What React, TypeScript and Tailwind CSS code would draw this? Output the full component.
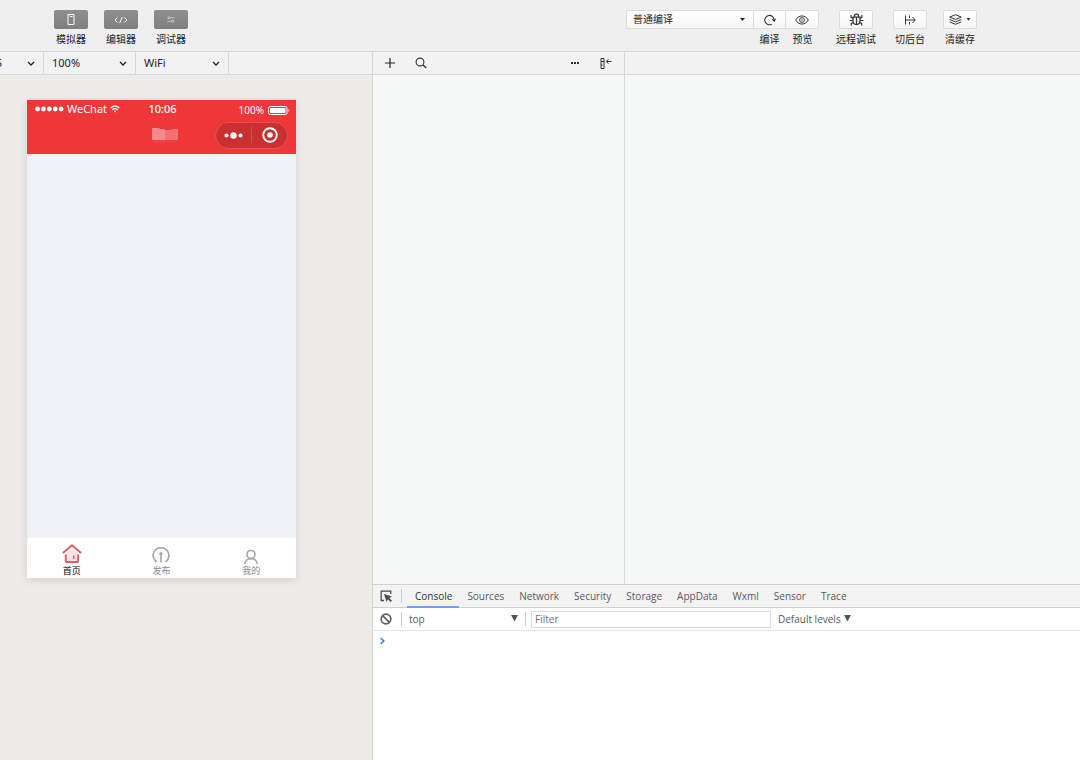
import type { ReactNode } from 'react'

const DEVTOOLS_TABS = ['Console', 'Sources', 'Network', 'Security', 'Storage', 'AppData', 'Wxml', 'Sensor', 'Trace']

const LIGHT_BUTTON = 'border border-[#dcdcdc] bg-linear-to-b from-white to-[#f6f6f6] text-[#333]'

export default function App() {
  return (
    <div className="flex min-h-screen flex-col overflow-hidden bg-[#eee] font-['Noto_Sans','Noto_Sans_CJK_SC',sans-serif] text-[11px] text-[#222]">
      <Toolbar />
      <div className="flex flex-1">
        <Simulator />
        <main className="flex min-w-0 flex-1 flex-col border-l border-[#d4d4d4]">
          <div className="flex flex-1">
            <FileTree />
            <section className="flex flex-1 flex-col">
              <div className="h-[23px] border-b border-[#d8d8d8] bg-[#f2f2f2]" />
              <div className="flex-1 bg-[#f6f8f7]" />
            </section>
          </div>
          <DevTools />
        </main>
      </div>
    </div>
  )
}

function Toolbar() {
  return (
    <header className="flex h-[52px] items-start justify-between border-b border-[#d8d8d8] bg-[#efefef] pt-2.5 pr-[103px] pl-[54px]">
      <div className="flex gap-4">
        <ToolButton label="模拟器" active>
          <PhoneIcon />
        </ToolButton>
        <ToolButton label="编辑器" active>
          <CodeIcon />
        </ToolButton>
        <ToolButton label="调试器" active>
          <SlidersIcon />
        </ToolButton>
      </div>
      <div className="flex gap-5">
        <div className="flex">
          <div className="grid h-[19px] w-[127px] items-center rounded-l-xs border border-r-0 border-[#dcdcdc] bg-linear-to-b from-white to-[#f6f6f6]">
            <select aria-label="编译模式" className="col-start-1 row-start-1 h-full appearance-none pl-1.5 text-[10px]">
              <option>普通编译</option>
            </select>
            <svg className="pointer-events-none col-start-1 row-start-1 mr-2 justify-self-end" width="5" height="3" viewBox="0 0 5 3">
              <path d="M0 0h5L2.5 3z" fill="#222" />
            </svg>
          </div>
          <ToolButton label="编译" width="w-[33px]" className="rounded-r-none rounded-l-none">
            <ReloadIcon />
          </ToolButton>
          <ToolButton label="预览" width="w-[33px]" className="rounded-l-none border-l-0">
            <EyeIcon />
          </ToolButton>
        </div>
        <ToolButton label="远程调试">
          <BugIcon />
        </ToolButton>
        <div className="flex gap-4">
          <ToolButton label="切后台">
            <BackgroundIcon />
          </ToolButton>
          <ToolButton label="清缓存">
            <LayersIcon />
          </ToolButton>
        </div>
      </div>
    </header>
  )
}

function ToolButton({
  children,
  label,
  active,
  width = 'w-[34px]',
  className = ''
}: {
  children: ReactNode
  label: string
  active?: boolean
  width?: string
  className?: string
}) {
  return (
    <button className={`flex flex-col items-center gap-0.5 text-[10px] leading-4 whitespace-nowrap ${width}`}>
      <span
        className={`flex h-[19px] w-full items-center justify-center rounded-xs ${
          active ? 'bg-linear-to-b from-[#8e8e8e] to-[#808080] text-white' : LIGHT_BUTTON
        } ${className}`}
      >
        {children}
      </span>
      <span>{label}</span>
    </button>
  )
}

function Simulator() {
  return (
    <aside className="flex w-[372px] shrink-0 flex-col bg-[#edece8]">
      <div className="flex h-[23px] border-b border-[#d8d8d8] bg-[#f2f2f2]">
        <div className="flex w-11 justify-end overflow-hidden border-r border-[#d8d8d8]">
          <BarSelect label="Device" value="iPhone 5" width="w-[94px]" />
        </div>
        <div className="border-r border-[#d8d8d8]">
          <BarSelect label="Zoom" value="100%" width="w-[91px]" />
        </div>
        <div className="border-r border-[#d8d8d8]">
          <BarSelect label="Network" value="WiFi" width="w-[92px]" />
        </div>
      </div>
      <div className="px-[27px] pt-[25px]">
        <Phone />
      </div>
    </aside>
  )
}

function BarSelect({ label, value, width }: { label: string; value: string; width: string }) {
  return (
    <div className={`grid h-full shrink-0 items-center ${width}`}>
      <select aria-label={label} className="col-start-1 row-start-1 h-full appearance-none pl-2">
        <option>{value}</option>
      </select>
      <svg
        className="pointer-events-none col-start-1 row-start-1 mr-2 justify-self-end"
        width="8"
        height="5"
        viewBox="0 0 8 5"
        fill="none"
        stroke="#222"
        strokeWidth="1.3"
      >
        <path d="M1 1l3 3 3-3" />
      </svg>
    </div>
  )
}

function Phone() {
  return (
    <div className="flex w-[269px] flex-col bg-[#f0f2f8] shadow-[0_2px_8px_rgba(0,0,0,0.12)]">
      <div className="bg-[#ed3739] text-white">
        <div className="grid h-[18px] grid-cols-3 items-center pr-1.5 pl-2 text-[11px] leading-4">
          <div className="flex items-center gap-[3px]">
            <svg width="29" height="6" viewBox="0 0 29 6" fill="#fff">
              <circle cx="2.6" cy="3" r="2.4" />
              <circle cx="8.5" cy="3" r="2.4" />
              <circle cx="14.4" cy="3" r="2.4" />
              <circle cx="20.3" cy="3" r="2.4" />
              <circle cx="26.2" cy="3" r="2.4" />
            </svg>
            <span>WeChat</span>
            <WifiIcon />
          </div>
          <span className="text-center text-[11px] font-medium">10:06</span>
          <div className="flex items-center justify-end gap-1 pt-0.5 text-[10px]">
            <span>100%</span>
            <svg width="22" height="9" viewBox="0 0 22 9" fill="none">
              <rect x="0.5" y="0.5" width="18.5" height="8" rx="1.8" stroke="#fff" />
              <rect x="2" y="2" width="15.5" height="5" rx="0.6" fill="#fff" />
              <path d="M20.5 3c1 .5 1 2.5 0 3z" fill="#fff" />
            </svg>
          </div>
        </div>
        <div className="grid h-9 grid-cols-[1fr_auto_1fr] items-center pr-2 pb-0.5 pl-3.5">
          <svg className="col-start-2" width="26" height="20" viewBox="0 0 26 20">
            <path d="M0 3h7l1 1h5v11H0z" fill="#f58a8c" />
            <path d="M13 5h6l1-1h6v11H13z" fill="#f27173" />
            <path d="M1 15h12v3H1z" fill="#ee4345" />
            <path d="M13 15h12v2H13z" fill="#ee3f41" />
          </svg>
          <div className="flex h-[27px] w-[73px] items-center justify-self-end rounded-full border border-[#e05557] bg-[#c93032]">
            <button aria-label="More" className="flex h-full flex-1 items-center justify-center">
              <svg width="19" height="7" viewBox="0 0 19 7" fill="#fff">
                <circle cx="2.5" cy="3.5" r="2" />
                <circle cx="9.5" cy="3.5" r="3.2" />
                <circle cx="16.5" cy="3.5" r="2" />
              </svg>
            </button>
            <span className="h-4 w-px bg-[#dc4a4c]" />
            <button aria-label="Close" className="flex h-full flex-1 items-center justify-center">
              <svg width="16" height="16" viewBox="0 0 16 16">
                <circle cx="8" cy="8" r="6.8" fill="none" stroke="#fff" strokeWidth="1.9" />
                <circle cx="8" cy="8" r="2.8" fill="#fff" />
              </svg>
            </button>
          </div>
        </div>
      </div>
      <div className="h-96" />
      <nav className="grid h-10 grid-cols-3 bg-white">
        <PhoneTab label="首页" active>
          <HomeIcon />
        </PhoneTab>
        <PhoneTab label="发布">
          <PublishIcon />
        </PhoneTab>
        <PhoneTab label="我的">
          <UserIcon />
        </PhoneTab>
      </nav>
    </div>
  )
}

function PhoneTab({ children, label, active }: { children: ReactNode; label: string; active?: boolean }) {
  return (
    <button
      className={`flex flex-col items-center justify-end pb-0.5 text-[9px] leading-[11px] ${active ? 'text-black' : 'text-[#8a8a8a]'}`}
    >
      {children}
      <span>{label}</span>
    </button>
  )
}

function FileTree() {
  return (
    <section className="flex w-[252px] flex-col border-r border-[#d8d8d8]">
      <div className="flex h-[23px] items-center border-b border-[#d8d8d8] bg-[#f2f2f2] px-3">
        <button aria-label="New file">
          <svg width="10" height="10" viewBox="0 0 10 10" stroke="#222" strokeWidth="1.2">
            <path d="M5 0v10M0 5h10" />
          </svg>
        </button>
        <button aria-label="Search" className="ml-5">
          <svg width="12" height="12" viewBox="0 0 12 12" fill="none" stroke="#333" strokeWidth="1.1">
            <circle cx="5" cy="5" r="3.9" />
            <path d="M8 8l3.2 3" strokeWidth="1.4" />
          </svg>
        </button>
        <button aria-label="More" className="ml-auto">
          <svg width="8" height="2" viewBox="0 0 8 2" fill="#333">
            <path d="M0 0h2v2H0zM3 0h2v2H3zM6 0h2v2H6z" />
          </svg>
        </button>
        <button aria-label="Collapse" className="ml-[21px]">
          <svg width="12" height="11" viewBox="0 0 12 11" fill="none" stroke="#333">
            <path d="M1 .5h3v10H1zM1 3.5h3M1 7h1.5M6.5 3.5h5M8.5 1.2L6.3 3.5l2.2 2.3" />
          </svg>
        </button>
      </div>
      <div className="flex-1 bg-[#f6f8f7]" />
    </section>
  )
}

function DevTools() {
  return (
    <section className="flex h-[176px] flex-col border-t border-[#d0d0d0] bg-white font-['Open_Sans','Noto_Sans',sans-serif] text-[10px] text-[#5a5a5a]">
      <div className="flex h-[23px] items-center border-b border-[#d0d0d0] bg-[#f3f3f3] pl-[7px]">
        <button aria-label="Inspect element">
          <InspectIcon />
        </button>
        <span className="ml-[9px] h-3.5 w-px bg-[#ccc]" />
        <div role="tablist" className="ml-[5px] flex self-stretch">
          {DEVTOOLS_TABS.map((tab, i) => (
            <button
              key={tab}
              role="tab"
              aria-selected={i === 0}
              className={`pr-[7px] pl-2 ${i === 0 ? '-mb-px border-b-2 border-[#6f9ff0] pt-0.5 text-[#333]' : ''}`}
            >
              {tab}
            </button>
          ))}
        </div>
      </div>
      <div className="flex h-[23px] items-center border-b border-[#e4e4e4] pl-[7px]">
        <button aria-label="Clear console">
          <svg width="12" height="12" viewBox="0 0 12 12" fill="none" stroke="#5c5c5c" strokeWidth="1.7">
            <circle cx="6" cy="6" r="4.8" />
            <path d="M2.6 2.6l6.8 6.8" />
          </svg>
        </button>
        <span className="ml-[9px] h-3.5 w-px bg-[#ccc]" />
        <div className="grid w-[123px] items-center">
          <select aria-label="Context" className="col-start-1 row-start-1 appearance-none pl-[7px]">
            <option>top</option>
          </select>
          <span className="pointer-events-none col-start-1 row-start-1 mr-[7px] justify-self-end">
            <Triangle />
          </span>
        </div>
        <span className="h-3.5 w-px bg-[#ccc]" />
        <input
          aria-label="Filter"
          placeholder="Filter"
          className="ml-[5px] h-[17px] w-60 border border-[#dcdcdc] px-[3px] placeholder:text-[#6e6e6e]"
        />
        <button className="ml-[7px] flex items-center gap-[3px]">
          Default levels
          <Triangle />
        </button>
      </div>
      <div className="pt-1.5 pl-[7px]">
        <svg width="5" height="8" viewBox="0 0 5 8" fill="none" stroke="#3f7fe8" strokeWidth="1.6">
          <path d="M.8 1.2L3.8 4 .8 6.8" />
        </svg>
      </div>
    </section>
  )
}

function Triangle() {
  return (
    <svg className="mb-0.5" width="7" height="7" viewBox="0 0 7 7">
      <path d="M0 0h7L3.5 6.5z" fill="#555" />
    </svg>
  )
}

function InspectIcon() {
  return (
    <svg width="12" height="12" viewBox="0 0 12 12" fill="none">
      <path d="M10.8 4V1.2H1.2v9.3H4" stroke="#4c4c4c" strokeWidth="1.3" />
      <path d="M4 4l8 2.6-2.6 1.3L12 10.700 10.700 12 8 9.300 6.600 12z" fill="#4c4c4c" />
    </svg>
  )
}

function PhoneIcon() {
  return (
    <svg width="8" height="11" viewBox="0 0 8 11" fill="none" stroke="currentColor">
      <path d="M1 .5h6v10H1zM3 2.5h2.5" />
    </svg>
  )
}

function CodeIcon() {
  return (
    <svg width="14" height="8" viewBox="0 0 14 8" fill="none" stroke="currentColor">
      <path d="M3.5 1.5L1 4l2.5 2.5M10.5 1.5L13 4l-2.5 2.5M8.3 1L5.7 7" />
    </svg>
  )
}

function SlidersIcon() {
  return (
    <svg width="8" height="7" viewBox="0 0 9 8" fill="none" stroke="#d4d4d4">
      <path d="M.5 2h1M4 2h4.5M.5 6H5M7.5 6h1" />
      <circle cx="2.7" cy="2" r="1.2" />
      <circle cx="6.3" cy="6" r="1.2" />
    </svg>
  )
}

function ReloadIcon() {
  return (
    <svg width="12" height="12" viewBox="0 0 12 12" fill="none" stroke="currentColor" strokeWidth="1.1">
      <path d="M7.8 10.2a4.7 4.7 0 1 1 2.4-4" />
      <path d="M8 5.2l2.2 1.9 1.5-2.3" />
    </svg>
  )
}

function EyeIcon() {
  return (
    <svg width="14" height="10" viewBox="0 0 14 10" fill="none" stroke="currentColor">
      <path d="M.7 5C3.5-.4 10.5-.4 13.3 5 10.5 10.4 3.5 10.4.7 5z" />
      <circle cx="7" cy="5" r="2.4" />
      <circle cx="7" cy="5" r=".7" fill="currentColor" stroke="none" />
    </svg>
  )
}

function BugIcon() {
  return (
    <svg width="15" height="13" viewBox="0 0 15 13" fill="none" stroke="currentColor" strokeWidth="1.2">
      <path d="M4 4.2h7v3.6c0 5-7 5-7 0zM5.2 4c0-3.8 4.6-3.8 4.6 0M7.5 4v7.5" />
      <path d="M4 5.5L2 4.2V2M11 5.5l2-1.3V2M4 7.5H.5M11 7.5h3.5M4.5 9.5L2.3 10.5V12.5M10.5 9.5l2.2 1V12.5" />
    </svg>
  )
}

function BackgroundIcon() {
  return (
    <svg width="12" height="10" viewBox="0 0 12 10" fill="none" stroke="currentColor">
      <path d="M1.5 .5v9M1.5 5h9.5M8.500 2L11.300 5 8.500 8M5.500 .5v2.500M5.500 7v2.500" />
    </svg>
  )
}

function LayersIcon() {
  return (
    <svg width="22" height="11" viewBox="0 0 22 11" fill="none" stroke="currentColor">
      <path d="M6.5 .7l5.8 2.4-5.8 2.4L.7 3.1zM.7 5.5l5.8 2.4 5.8-2.4M.7 7.9l5.8 2.4 5.8-2.4" />
      <path d="M17.5 4h4l-2 2.8z" fill="currentColor" stroke="none" />
    </svg>
  )
}

function WifiIcon() {
  return (
    <svg width="10" height="8" viewBox="0 0 11 8" fill="none" stroke="#fff" strokeWidth="1.3">
      <path d="M.7 2.9c2.7-2.7 6.9-2.7 9.6 0M2.5 4.8c1.7-1.7 4.3-1.7 6 0" />
      <path d="M5.5 7.8L4 6.2c.8-.8 2.2-.8 3 0z" fill="#fff" stroke="none" />
    </svg>
  )
}

function HomeIcon() {
  return (
    <svg width="20" height="21" viewBox="0 0 20 21" fill="none" stroke="#dc6066" strokeWidth="2">
      <path d="M4 9l6-5 6 5v8H4z" fill="#fbe3e5" stroke="none" />
      <path d="M1.5 8.500L10 1.300l8.500 7.200" strokeLinecap="round" />
      <path d="M3.800 10.500v6.500q0 1 1 1h10.400q1 0 1-1v-6.500" />
      <path d="M11.700 11.500v3.500" strokeWidth="1.600" />
    </svg>
  )
}

function PublishIcon() {
  return (
    <svg width="20" height="18" viewBox="0 0 20 18" fill="none" stroke="#a8a8a8" strokeWidth="1.7">
      <path d="M5.500 15a7.900 7.900 0 1 1 9 0" />
      <path d="M10 6v9.500" />
      <path d="M7.500 7.500L10 4.500l2.500 3z" fill="#a8a8a8" stroke="none" />
    </svg>
  )
}

function UserIcon() {
  return (
    <svg width="16" height="16" viewBox="0 0 16 16" fill="none" stroke="#a8a8a8" strokeWidth="1.7">
      <circle cx="8" cy="5.5" r="4" />
      <path d="M1.8 15c.4-7.300 12-7.300 12.400 0" />
    </svg>
  )
}
